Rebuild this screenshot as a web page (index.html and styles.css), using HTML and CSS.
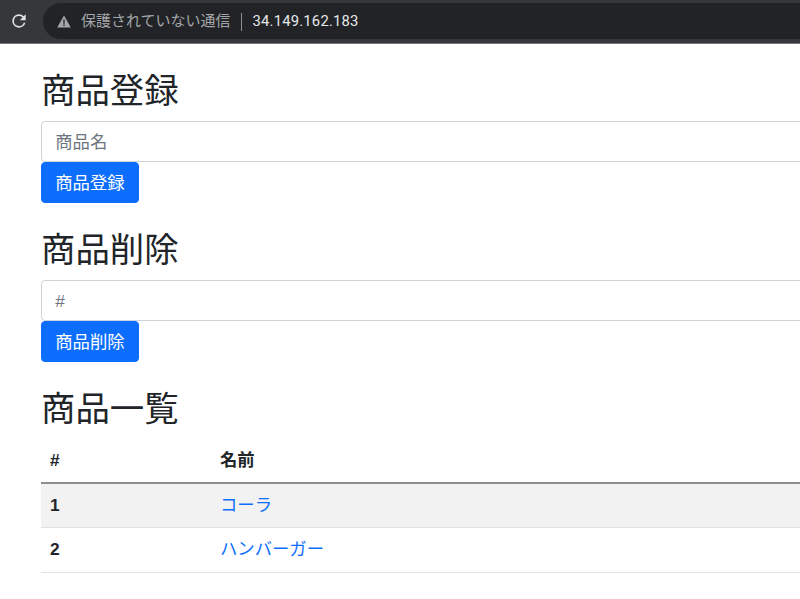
FILE: index.html
```html
<!DOCTYPE html>
<html lang="ja">
<head>
<meta charset="utf-8">
<title>商品</title>
<link rel="stylesheet" href="styles.css">
</head>
<body>
<header class="toolbar">
  <svg class="reload" viewBox="0 0 24 24" width="20" height="20"><path fill="#e3e4e6" d="M17.65 6.35A7.96 7.96 0 0 0 12 4a8 8 0 1 0 7.73 10h-2.08A6 6 0 1 1 12 6c1.66 0 3.14.69 4.22 1.78L13 11h7V4l-2.35 2.35z"/></svg>
  <div class="omnibox">
    <svg class="warn" viewBox="0 0 14 13" width="14" height="13"><path fill="#a4a6a9" d="M7 .5 13.8 12.5H.2z"/><path fill="#26272b" d="M6.3 4.6h1.4v4.2H6.3zM6.3 9.6h1.4v1.4H6.3z"/></svg>
    <span class="insecure">保護されていない通信</span>
    <span class="sep"></span>
    <span class="address">34.149.162.183</span>
  </div>
</header>
<main class="content">
  <h2 class="title">商品登録</h2>
  <input class="field" type="text" placeholder="商品名">
  <button class="btn" type="button">商品登録</button>
  <h2 class="title">商品削除</h2>
  <input class="field" type="text" placeholder="#">
  <button class="btn" type="button">商品削除</button>
  <h2 class="title">商品一覧</h2>
  <table class="table">
    <thead><tr><th class="col-id">#</th><th>名前</th></tr></thead>
    <tbody>
      <tr class="odd"><th>1</th><td><a href="#">コーラ</a></td></tr>
      <tr><th>2</th><td><a href="#">ハンバーガー</a></td></tr>
    </tbody>
  </table>
</main>
</body>
</html>
```
FILE: styles.css
```css
* { box-sizing: border-box; }
html, body { margin: 0; height: 100%; overflow: hidden; background: #fff; }
body {
  font-family: "Liberation Sans", "Noto Sans CJK JP", sans-serif;
  font-size: 17.33px;
  line-height: 1.5;
  color: #212529;
}
.toolbar {
  height: 44px;
  background: #36373b;
  border-bottom: 1px solid #77787b;
  display: flex;
  align-items: center;
  padding: 0 0 1px 9px;
}
.reload { flex: none; }
.omnibox {
  flex: 1;
  margin-left: 14px;
  margin-right: -30px;
  height: 36px;
  border-radius: 18px;
  background: #212327;
  display: flex;
  align-items: center;
  padding: 1px 0 0 14px;
  font-size: 15px;
}
.warn { flex: none; margin-top: -1px; }
.insecure { margin-left: 10px; color: #a4a6a9; }
.sep { width: 1px; height: 18px; background: #8d8e91; margin: 0 11px 0 10px; }
.address { color: #e6e7e9; font-family: Roboto, sans-serif; font-size: 14.8px; letter-spacing: 0.2px; }
.content { width: 1000px; margin-left: 41px; }
.title {
  margin: 0;
  padding-top: 27px;
  height: 77px;
  font-size: 34.4px;
  font-weight: 400;
  line-height: 1.2;
}
.field {
  display: block;
  width: 100%;
  height: 41px;
  padding: 2px 13.3px 0;
  font: inherit;
  color: #212529;
  border: 1px solid #ced4da;
  border-radius: 4px;
  background: #fff;
}
.field::placeholder { color: #6c757d; opacity: 1; }
.btn {
  display: block;
  height: 41px;
  padding: 2px 13.3px 0;
  font: inherit;
  color: #fff;
  background: #0d6efd;
  border: 1px solid #0d6efd;
  border-radius: 4px;
}
.table { width: 100%; border-collapse: collapse; }
.table th, .table td {
  padding: 0 9px;
  height: 44.6px;
  text-align: left;
  border-bottom: 1px solid #dee2e6;
  font-size: 17.33px;
}
.table thead th { border-bottom: 2px solid #8e8f91; height: 44px; padding-top: 1px; }
.col-id { width: 170px; }
.odd th, .odd td { background: #f2f2f2; }
.table a { color: #0d6efd; text-decoration: none; }
```
